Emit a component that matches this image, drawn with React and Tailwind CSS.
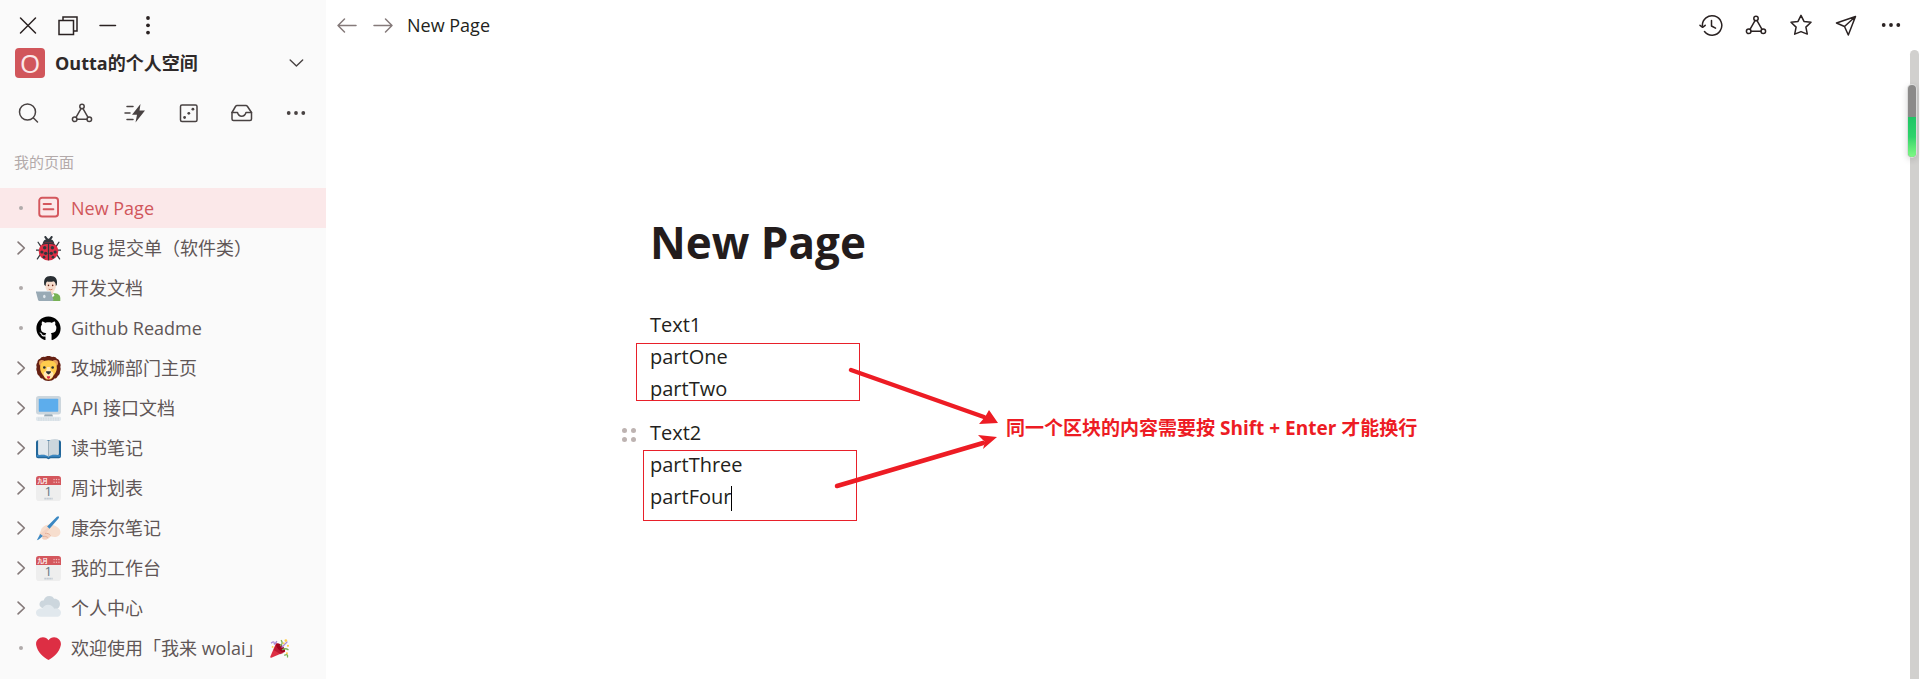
import React from "react";
import { FaGithub } from "react-icons/fa";

const stroke = {
  fill: "none",
  stroke: "currentColor",
  strokeWidth: 1.5,
  strokeLinecap: "round",
  strokeLinejoin: "round",
};

function Icon({ children, className = "size-6" }) {
  return (
    <svg viewBox="0 0 24 24" className={`${className} shrink-0`} aria-hidden="true" {...stroke}>
      {children}
    </svg>
  );
}

const CloseIcon = () => (
  <Icon>
    <path d="M4.500 5l15 15M19.500 5L4.500 20" />
  </Icon>
);
const WindowsIcon = () => (
  <Icon>
    <path d="M3 7.500h14.500v14H3zM7 7V4h14v14h-3.500" strokeLinejoin="miter" />
  </Icon>
);
const MinusIcon = () => (
  <Icon>
    <path d="M4 12.500h15.500" />
  </Icon>
);
const MoreVerticalIcon = () => (
  <Icon>
    <g fill="currentColor" stroke="none">
      <circle cx="12" cy="5" r="1.900" />
      <circle cx="12" cy="12.300" r="1.900" />
      <circle cx="12" cy="19.600" r="1.900" />
    </g>
  </Icon>
);
const MoreIcon = () => (
  <Icon>
    <g fill="currentColor" stroke="none">
      <circle cx="4.700" cy="12" r="1.900" />
      <circle cx="12" cy="12" r="1.900" />
      <circle cx="19.300" cy="12" r="1.900" />
    </g>
  </Icon>
);
const SearchIcon = () => (
  <Icon>
    <circle cx="11.500" cy="11" r="8" />
    <path d="M17.500 17l4 4" />
  </Icon>
);
const GraphIcon = () => (
  <Icon>
    <circle cx="12" cy="5.500" r="2.200" />
    <circle cx="4.700" cy="18.300" r="2.300" />
    <circle cx="19.300" cy="18.300" r="2.300" />
    <path d="M11 7.600L6 16.300M13 7.600l5 8.700M7 18.300h10" />
  </Icon>
);
const FlashIcon = () => (
  <Icon>
    <path d="M4 5.500h6M2 12h5M4 18.500h6" />
    <path d="M17.500 3l-8.500 10.800h5l-1.500 7.700 9.500-12h-5.500z" fill="currentColor" stroke="none" />
  </Icon>
);
const DiceIcon = () => (
  <Icon>
    <rect x="3.500" y="4" width="16.500" height="16.500" rx="1.500" />
    <g fill="currentColor" stroke="none">
      <circle cx="7.600" cy="16.500" r="1.400" />
      <circle cx="11.800" cy="12.300" r="1.400" />
      <circle cx="15.900" cy="8.200" r="1.400" />
    </g>
  </Icon>
);
const InboxIcon = () => (
  <Icon>
    <path d="M2 11.500L5.500 5.500Q6 4.500 7.200 4.500h8.600q1.200 0 1.700 1l4 6v6.500q0 1.500-1.500 1.500H3.500q-1.500 0-1.500-1.500z" />
    <path d="M2 11.500h5.500q1 3.700 4.200 3.700t4.300-3.700h5.500" />
  </Icon>
);
const ChevronDownIcon = () => (
  <Icon className="size-5">
    <path d="M5 8.500l7.500 7 7.500-7" strokeWidth="1.700" />
  </Icon>
);
const ChevronRightIcon = () => (
  <Icon className="size-5">
    <path d="M8.500 5l7.500 7-7.500 7" strokeWidth="2" />
  </Icon>
);
const ArrowLeftIcon = () => (
  <Icon>
    <path d="M21 12.500H3M9.500 6L3 12.500l6.500 6.500" />
  </Icon>
);
const ArrowRightIcon = () => (
  <Icon>
    <path d="M3 12.500h18M14.500 6l6.500 6.500-6.500 6.500" />
  </Icon>
);
const HistoryIcon = () => (
  <Icon>
    <path d="M3.400 13A9.700 9.700 0 1 1 5.500 18.500" />
    <path d="M1 12.300l2.600 2 2.600-2M12.500 7.500v5.500l4 2.200" />
  </Icon>
);
const StarIcon = () => (
  <Icon>
    <path d="M12 2.300l3 6.100 7 .9-5.100 4.800 1.400 7-6.300-2.500-6.300 2.500 1.400-7L2 9.300l7-.9z" />
  </Icon>
);
const SendIcon = () => (
  <Icon>
    <path d="M21.500 3.500L2.500 10l8 3.500 3.800 8.500zM10.500 13.500L21.500 3.500" />
  </Icon>
);

function Emoji({ children, className = "size-[25px]" }) {
  return (
    <svg viewBox="0 0 36 36" className={`${className} shrink-0`} aria-hidden="true">
      {children}
    </svg>
  );
}

const PageGlyph = () => (
  <Emoji>
    <g fill="none" stroke="#d4575d" strokeWidth="2.800" strokeLinecap="round">
      <rect x="4.700" y="2.600" width="27" height="27" rx="4" />
      <path d="M11 11.500h10.500M11 19h14" />
    </g>
  </Emoji>
);
const Ladybug = () => (
  <Emoji>
    <path
      d="M3 9l4 6 4 2M0 20.500h8M2 33l4-6 4-2M33 9l-4 6-4 2M36 20.500h-8M34 33l-4-6-4-2"
      fill="none" stroke="#31373d" strokeWidth="1.800" strokeLinecap="round"
    />
    <path d="M13.500 1.500l3 4M22.500 1.500l-3 4" stroke="#31373d" strokeWidth="3" strokeLinecap="round" />
    <path d="M9.500 13C9.500 7 13 4 18 4s8.500 3 8.500 9z" fill="#31373d" />
    <ellipse cx="18" cy="22" rx="14" ry="13.300" fill="#dd2e44" />
    <path d="M8 13.500C10.500 10 14 9 18 9s7.500 1 10 4.500c-3-1.500-6.500-2-10-2s-7 .500-10 2z" fill="#31373d" />
    <path d="M18 11v24" stroke="#31373d" strokeWidth="1.800" />
    <g fill="#31373d">
      <circle cx="12.500" cy="17" r="2.500" />
      <circle cx="23.500" cy="17" r="2.500" />
      <circle cx="8.500" cy="23" r="2.300" />
      <circle cx="27.500" cy="23" r="2.300" />
      <circle cx="14" cy="25" r="2.500" />
      <circle cx="22" cy="25" r="2.500" />
      <circle cx="11.500" cy="30.500" r="2" />
      <circle cx="24.500" cy="30.500" r="2" />
    </g>
  </Emoji>
);
const Developer = () => (
  <Emoji>
    <path d="M9 36v-6c0-3.500 4-5 8-5h8c6 0 10 2 10 7v4z" fill="#77b255" />
    <path d="M17 20h8v6q-4 4-8 0z" fill="#f3d2c2" />
    <path d="M16.500 25.500l4.500 3.500 4.500-3.500 1 3-5.500 4-5.500-4z" fill="#fff" />
    <ellipse cx="21" cy="14" rx="7.700" ry="9.500" fill="#f7dece" />
    <path d="M12 13C10.500 4 14 0 21 0s10.500 4 9 13l-1.500 1.500c0-4-1-6-3-7-4 1.300-8 .800-9.500.300-1.500 1-2 3-2 6.700z" fill="#292f33" />
    <circle cx="18" cy="13.500" r="1.100" fill="#662113" />
    <circle cx="24" cy="13.500" r="1.100" fill="#662113" />
    <path d="M18.300 19q2.700 1.700 5.400 0" fill="none" stroke="#c1694f" strokeWidth="1.200" />
    <path d="M1.500 21.500h18q1.500 0 2 1.500l3.500 11q.5 2-1.500 2H5q-1.500 0-2-1.500L0 23.500q-.4-2 1.500-2z" fill="#99aab5" />
    <path d="M1 21.500h18.500q1.500 0 2 1.500H0q0-1 1-1.500z" fill="#ccd6dd" />
    <ellipse cx="12" cy="29.500" rx="1.800" ry="2.400" fill="#e1e8ed" />
  </Emoji>
);
const Lion = () => (
  <Emoji>
    <path d="M18 0c3 0 4 1 5.500 1.500C26 .5 29 2 30 4c3 .5 4 3 4 5.500 1.500 2 2 4 1 6.500 1 2.500.5 4.500-.5 6.500 0 3-1 5-3 6-1 3-3 4-5 4-2 3-5 3.500-8.500 3.500S11.500 35.500 9.500 32.500c-2 0-4-1-5-4-2-1-3-3-3-6C.5 20.500 0 18.500 1 16 0 13.500.5 11.500 2 9.500 2 7 3 4.500 6 4c1-2 4-3.500 6.500-2.500C14 1 15 0 18 0z" fill="#662113" />
    <circle cx="8.500" cy="10" r="4.200" fill="#e8a05a" />
    <circle cx="27.500" cy="10" r="4.200" fill="#e8a05a" />
    <path d="M18 6c8 0 12.500 4.500 12 11.500-.3 6-4 9-5.500 12-1 2.500-3 4.500-6.500 4.500s-5.500-2-6.500-4.500C10 26.500 6.300 23.500 6 17.500 5.500 10.500 10 6 18 6z" fill="#ffcc4d" />
    <path d="M16 16h4l1.500 6c3 .500 4 2.500 3.500 5-.5 3.500-3.500 6-7 6s-6.500-2.500-7-6c-.5-2.500.500-4.500 3.500-5z" fill="#ffe8b6" />
    <circle cx="12" cy="16.500" r="1.900" fill="#292f33" />
    <circle cx="24" cy="16.500" r="1.900" fill="#292f33" />
    <path d="M14.500 22h7q.800 2-2 3.500l-1.500 1-1.500-1q-2.800-1.500-2-3.500z" fill="#292f33" />
    <path d="M15.500 29h5q0 4-2.500 4t-2.500-4z" fill="#dd2e44" />
  </Emoji>
);
const Computer = () => (
  <Emoji>
    <path d="M13 25h10l1.500 4.500h-13z" fill="#99aab5" />
    <rect width="36" height="26.500" rx="4" fill="#ccd6dd" />
    <rect x="4" y="4" width="28" height="18.500" rx="1" fill="#5dadec" />
    <rect y="30" width="36" height="6" rx="2" fill="#e1e8ed" />
    <path d="M3 32h30M3 34.500h30" stroke="#ccd6dd" strokeWidth="1.300" strokeDasharray="2 1.500" />
  </Emoji>
);
const Book = () => (
  <Emoji>
    <path d="M0 9q0-3 3-3h30q3 0 3 3v20q0 3-3 3H21l-3 1.500-3-1.500H3q-3 0-3-3z" fill="#226699" />
    <path d="M1 27.500h15l2 1.500 2-1.500h15V30H20l-2 2-2-2H1z" fill="#3b88c3" />
    <path d="M3 7q0-2 2-2.300 9-1.200 13 2.800v22c-4-3-8-3-13-2.200q-2 .2-2-1.800z" fill="#e1e8ed" />
    <path d="M33 7q0-2-2-2.300-9-1.200-13 2.800v22c4-3 8-3 13-2.200q2 .2 2-1.800z" fill="#ccd6dd" />
    <path d="M18 7.500v22" stroke="#99aab5" strokeWidth="1.200" />
  </Emoji>
);
const Calendar = () => (
  <Emoji>
    <path d="M0 11h36v20.500q0 4.500-4.500 4.500h-27Q0 36 0 31.500z" fill="#eee" />
    <path d="M4 0h28q4 0 4 4v9H0V4q0-4 4-4z" fill="#d4575d" />
    <text x="2" y="10.500" fontSize="7.500" fontWeight="700" fill="#fff">九月</text>
    <g fill="#f3b9bc">
      <circle cx="26" cy="5" r="1" /><circle cx="29.500" cy="5" r="1" /><circle cx="33" cy="5" r="1" />
      <circle cx="26" cy="9" r="1" /><circle cx="29.500" cy="9" r="1" /><circle cx="33" cy="9" r="1" />
    </g>
    <text x="17.500" y="29" fontSize="19" fontWeight="400" textAnchor="middle" fill="#66757f">1</text>
    <path d="M12 32.500h12" stroke="#c3cbd3" strokeWidth="2.600" strokeDasharray="3 .500" />
  </Emoji>
);
const WritingHand = () => (
  <Emoji>
    <path d="M8 18c4-5 9-6.500 14-5.500 5 .5 9 3 12 6.500 2 3 1.500 7-1 9-4 3-8 2.500-12 1-2 2.500-5 5-9 5-3 0-4-2.500-2-4.500l-4-1c-1.500-1.500-1-3.500 0-5z" fill="#f7dece" />
    <path d="M8 24l9-7c2-.5 3 1 2 2.500L14 25c4 1 7 2 7 4-2 2.500-5 5-9 5-3 0-4-2.500-2-4.500l-4-1c-1.500-1.500-.5-3.500 2-4.500z" fill="#f3d2c2" />
    <path d="M13 25c3-.5 6 .5 8 3M10 29.500c3-.5 5 0 7 1.500" fill="none" stroke="#e0aa94" strokeWidth="1.300" />
    <path d="M30 1q2.500-1.500 3 0t-1 3L19.500 18.500 16 15z" fill="#3b88c3" />
    <path d="M6 26l4 2.800L4 34l-2.800 1z" fill="#3b88c3" />
  </Emoji>
);
const Cloud = () => (
  <Emoji>
    <path d="M13 18c-4 0-8-2-8-6 0-3 2-6 6-5.500C12 2.500 15 0 19 0c4 0 6 2 7 4 5-.5 8.500 3 8.500 7.500 0 5-3.500 8-7.500 8z" fill="#ccd6dd" />
    <path d="M28.500 18c-1 0-1.500 0-2.200.3C25 15 21.500 12.500 17.500 12.500c-4.500 0-7 2.500-8.500 5.700C4 17.700 0 20 0 24.500 0 28 3 30 6.500 30h22c4.500 0 7.500-2 7.500-6s-3.500-6-7.500-6z" fill="#e1e8ed" />
  </Emoji>
);
const Heart = () => (
  <Emoji>
    <path d="M35.900 11.500c0-5.400-4.400-9.700-9.800-9.700-3.300 0-6.300 1.700-8.100 4.200-1.800-2.500-4.700-4.200-8.100-4.200C4.500 1.800.1 6.100.1 11.500c0 .8.100 1.500.3 2.200C1.900 22.700 11.900 32.200 18 34.400c6.100-2.200 16.100-11.700 17.600-20.700.2-.7.300-1.400.3-2.200z" fill="#dd2e44" />
  </Emoji>
);
const Party = () => (
  <Emoji className="-ml-1 size-[19px]">
    <path d="M11.500 7.500L.5 33.500q-.5 2.500 2 2L29 24z" fill="#dd2e44" />
    <path d="M12 9l-5 12 13 8 5-2z" fill="#a0041e" opacity=".5" />
    <ellipse cx="20" cy="16.500" rx="5" ry="11" transform="rotate(-45 20 16.500)" fill="#a0041e" />
    <path d="M2 8q6-5 6 0t5-4" fill="none" stroke="#aa8dd8" strokeWidth="2.500" />
    <path d="M19 13q7-4 2-11M27 31q8-4 6 4" fill="none" stroke="#77b255" strokeWidth="2.500" />
    <path d="M22 16l11-11" stroke="#aa8dd8" strokeWidth="2.500" />
    <path d="M23 21q6-5 12 0" fill="none" stroke="#77b255" strokeWidth="2.500" />
    <g fill="#ffcc4d">
      <circle cx="30" cy="3" r="2.500" /><circle cx="34" cy="13" r="2" /><circle cx="26" cy="8" r="2" />
      <circle cx="5" cy="15" r="1.800" /><circle cx="32" cy="27" r="2" />
    </g>
  </Emoji>
);

const GithubMark = () => <FaGithub className="size-[25px] shrink-0 text-black" aria-hidden="true" />;

const pages = [
  { title: "New Page", icon: PageGlyph, active: true },
  { title: "Bug 提交单（软件类）", icon: Ladybug, nested: true },
  { title: "开发文档", icon: Developer },
  { title: "Github Readme", icon: GithubMark },
  { title: "攻城狮部门主页", icon: Lion, nested: true },
  { title: "API 接口文档", icon: Computer, nested: true },
  { title: "读书笔记", icon: Book, nested: true },
  { title: "周计划表", icon: Calendar, nested: true },
  { title: "康奈尔笔记", icon: WritingHand, nested: true },
  { title: "我的工作台", icon: Calendar, nested: true },
  { title: "个人中心", icon: Cloud, nested: true },
  { title: "欢迎使用「我来 wolai」", icon: Heart, trailing: Party },
];

function IconButton({ label, children }) {
  return (
    <button type="button" aria-label={label} className="flex shrink-0 items-center justify-center">
      {children}
    </button>
  );
}

function PageRow({ title, icon: Glyph, nested, active, trailing: Trailing }) {
  return (
    <li className={active ? "flex h-10 items-center bg-[#fbe8e9] text-[#d1565b]" : "flex h-10 items-center text-[#605656]"}>
      <span className="flex w-9 shrink-0 items-center justify-center pl-1.5 text-[#857a7a]">
        {nested ? (
          <IconButton label={`展开 ${title}`}>
            <ChevronRightIcon />
          </IconButton>
        ) : (
          <span className="size-1 rounded-full bg-[#b0abab]" />
        )}
      </span>
      <a href="#" className="flex min-w-0 grow items-center gap-2.5 text-lg">
        <Glyph />
        <span className="whitespace-nowrap">{title}</span>
        {Trailing && <Trailing />}
      </a>
    </li>
  );
}

function Sidebar() {
  return (
    <aside className="flex w-[326px] shrink-0 flex-col bg-[#fafafa]">
      <div className="flex gap-4 px-4 pt-[13px] text-[#2a2222]">
        <IconButton label="关闭"><CloseIcon /></IconButton>
        <IconButton label="窗口"><WindowsIcon /></IconButton>
        <IconButton label="最小化"><MinusIcon /></IconButton>
        <IconButton label="菜单"><MoreVerticalIcon /></IconButton>
      </div>
      <button type="button" className="mt-[11px] flex items-center gap-2.5 pr-5 pl-[15px] text-left text-[#484242]">
        <span className="flex size-[30px] items-center justify-center rounded bg-[#d1565b] text-[26px] leading-none text-[#fbe8e9]">O</span>
        <span className="grow text-lg leading-[30px] font-bold text-[#2e2929]">Outta的个人空间</span>
        <ChevronDownIcon />
      </button>
      <div className="mt-[23px] flex justify-between pr-[18px] pl-4 text-[#484242]">
        <IconButton label="搜索"><SearchIcon /></IconButton>
        <IconButton label="图谱"><GraphIcon /></IconButton>
        <IconButton label="快捷"><FlashIcon /></IconButton>
        <IconButton label="随机"><DiceIcon /></IconButton>
        <IconButton label="收件箱"><InboxIcon /></IconButton>
        <IconButton label="更多"><MoreIcon /></IconButton>
      </div>
      <h2 className="mt-[27px] px-3.5 text-[15px] leading-5 text-[#b3aaaa]">我的页面</h2>
      <ul className="mt-4 flex flex-col">
        {pages.map((page) => (
          <PageRow key={page.title} {...page} />
        ))}
      </ul>
    </aside>
  );
}

function TopBar() {
  return (
    <header className="flex h-[50px] items-center justify-between pr-[17px] pl-[9px]">
      <nav className="flex items-center gap-3 text-[#857a7a]">
        <IconButton label="后退"><ArrowLeftIcon /></IconButton>
        <IconButton label="前进"><ArrowRightIcon /></IconButton>
        <a href="#" className="text-lg text-[#231f20]">New Page</a>
      </nav>
      <div className="flex items-center gap-[21px] text-[#2a2222]">
        <IconButton label="历史"><HistoryIcon /></IconButton>
        <IconButton label="图谱"><GraphIcon /></IconButton>
        <IconButton label="收藏"><StarIcon /></IconButton>
        <IconButton label="分享"><SendIcon /></IconButton>
        <IconButton label="更多"><MoreIcon /></IconButton>
      </div>
    </header>
  );
}

function Notes() {
  return (
    <>
      <div className="absolute top-[34px] -left-3.5 h-[58px] w-[224px] border border-[#e8202a]" />
      <div className="absolute top-[141px] -left-[7px] h-[71px] w-[214px] border border-[#e8202a]" />
      <svg className="absolute top-0 left-0 h-[210px] w-[360px]" viewBox="0 0 360 210" aria-hidden="true">
        <g stroke="#ed1c24" strokeWidth="4.500" strokeLinecap="round">
          <path d="M201 61L334 108" />
          <path d="M187 177L333 134" />
        </g>
        <path d="M348 114L329 115L335 108L339 101z" fill="#ed1c24" />
        <path d="M347 128L328 126L335 133L333 140z" fill="#ed1c24" />
      </svg>
      <p className="absolute top-[103px] left-[356px] text-[19px] leading-8 font-bold whitespace-nowrap text-[#ed1c24]">
        同一个区块的内容需要按 Shift + Enter 才能换行
      </p>
    </>
  );
}

function Document() {
  return (
    <article className="mx-auto w-full max-w-[946px] pt-40">
      <h1 className="text-[44px] leading-[64px] font-bold text-[#231c1c]">New Page</h1>
      <div className="relative mt-[35px] text-xl leading-8 text-[#231f20]">
        <p>Text1<br />partOne<br />partTwo</p>
        <div className="relative mt-3">
          <button type="button" aria-label="拖动区块" className="absolute top-[11px] -left-7 grid grid-cols-2 gap-1">
            <span className="size-[5px] rounded-full bg-[#bdb3b1]" />
            <span className="size-[5px] rounded-full bg-[#bdb3b1]" />
            <span className="size-[5px] rounded-full bg-[#bdb3b1]" />
            <span className="size-[5px] rounded-full bg-[#bdb3b1]" />
          </button>
          <p>
            Text2<br />partThree<br />partFour
            <span className="inline-block h-[25px] w-px bg-black align-middle" />
          </p>
        </div>
        <Notes />
      </div>
    </article>
  );
}

export default function App() {
  return (
    <div className="flex min-h-screen bg-white font-['Open_Sans','Noto_Sans_CJK_SC',sans-serif]">
      <Sidebar />
      <main className="relative flex min-w-0 grow flex-col">
        <TopBar />
        <Document />
        <div className="absolute top-[50px] right-px bottom-0 w-[9px] rounded-t-full bg-[#d1d0ce]" />
        <div className="absolute top-[85px] right-1 flex h-[72px] w-2 flex-col overflow-hidden rounded-full bg-[#8b8a89] shadow-[0_2px_6px_1px_rgba(0,0,0,0.15)] ring-1 ring-[#dcdcdc]">
          <span className="mt-8 grow bg-linear-to-b from-[#1fc565] via-[#2fd36b] to-[#7dfa84]" />
        </div>
      </main>
    </div>
  );
}
